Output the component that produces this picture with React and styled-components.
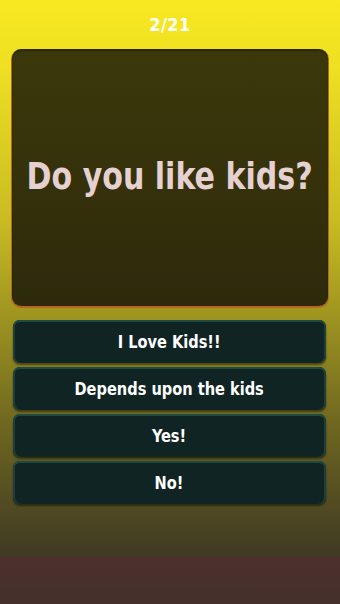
import React from 'react'
import styled, { createGlobalStyle } from 'styled-components'

const GlobalStyle = createGlobalStyle`
  html, body {
    margin: 0;
    padding: 0;
    height: 100%;
  }
  body {
    font-family: "DejaVu Sans Condensed", "DejaVu Sans", sans-serif;
  }
`

const Screen = styled.div`
  width: 340px;
  height: 604px;
  display: flex;
  flex-direction: column;
  overflow: hidden;
`

const Stage = styled.div`
  flex: 1;
  display: flex;
  flex-direction: column;
  padding: 0 12px;
  background: linear-gradient(
    180deg,
    #f8e821 0%,
    #eee022 12%,
    #c7bb22 40%,
    #9b9120 58%,
    #6f6720 76%,
    #3f3924 100%
  );
`

const Counter = styled.div`
  height: 49px;
  display: flex;
  align-items: center;
  justify-content: center;
  color: #ffffff;
  font-weight: bold;
  font-size: 18px;
  letter-spacing: 0.5px;
`

const QuestionCard = styled.div`
  height: 257px;
  border-radius: 9px;
  background: linear-gradient(180deg, #3b380b 0%, #34300b 60%, #2d290c 100%);
  box-shadow: 0 1px 0 1px #b8661f, inset 0 2px 2px rgba(0, 0, 0, 0.3);
  display: flex;
  align-items: center;
  justify-content: center;
`

const QuestionText = styled.div`
  color: #e5d1d1;
  font-weight: bold;
  font-size: 38px;
  white-space: nowrap;
  transform: scaleX(0.88);
  padding-bottom: 4px;
`

const Answers = styled.div`
  display: flex;
  flex-direction: column;
  gap: 4px;
  margin-top: 14px;
  padding: 0 2px 0 1px;
`

const AnswerButton = styled.button`
  height: 43px;
  border: none;
  border-radius: 7px;
  background: #102423;
  box-shadow: inset 0 2px 0 #1f4a44, inset 2px 0 0 #1d3e3a, inset -2px 0 0 #1d3e3a,
    0 2px 2px rgba(0, 0, 0, 0.45);
  color: #ffffff;
  font-family: inherit;
  font-weight: bold;
  font-size: 18px;
  display: flex;
  align-items: center;
  justify-content: center;
  cursor: pointer;
`

const AnswerLabel = styled.span`
  white-space: nowrap;
  transform: scaleX(0.9);
`

const Footer = styled.div`
  height: 47px;
  background: linear-gradient(180deg, #4b302c 0%, #46302c 100%);
`

const answers = ['I Love Kids!!', 'Depends upon the kids', 'Yes!', 'No!']

export default function App() {
  return (
    <>
      <GlobalStyle />
      <Screen>
        <Stage>
          <Counter>2/21</Counter>
          <QuestionCard>
            <QuestionText>Do you like kids?</QuestionText>
          </QuestionCard>
          <Answers>
            {answers.map((a) => (
              <AnswerButton key={a}>
                <AnswerLabel>{a}</AnswerLabel>
              </AnswerButton>
            ))}
          </Answers>
        </Stage>
        <Footer />
      </Screen>
    </>
  )
}
